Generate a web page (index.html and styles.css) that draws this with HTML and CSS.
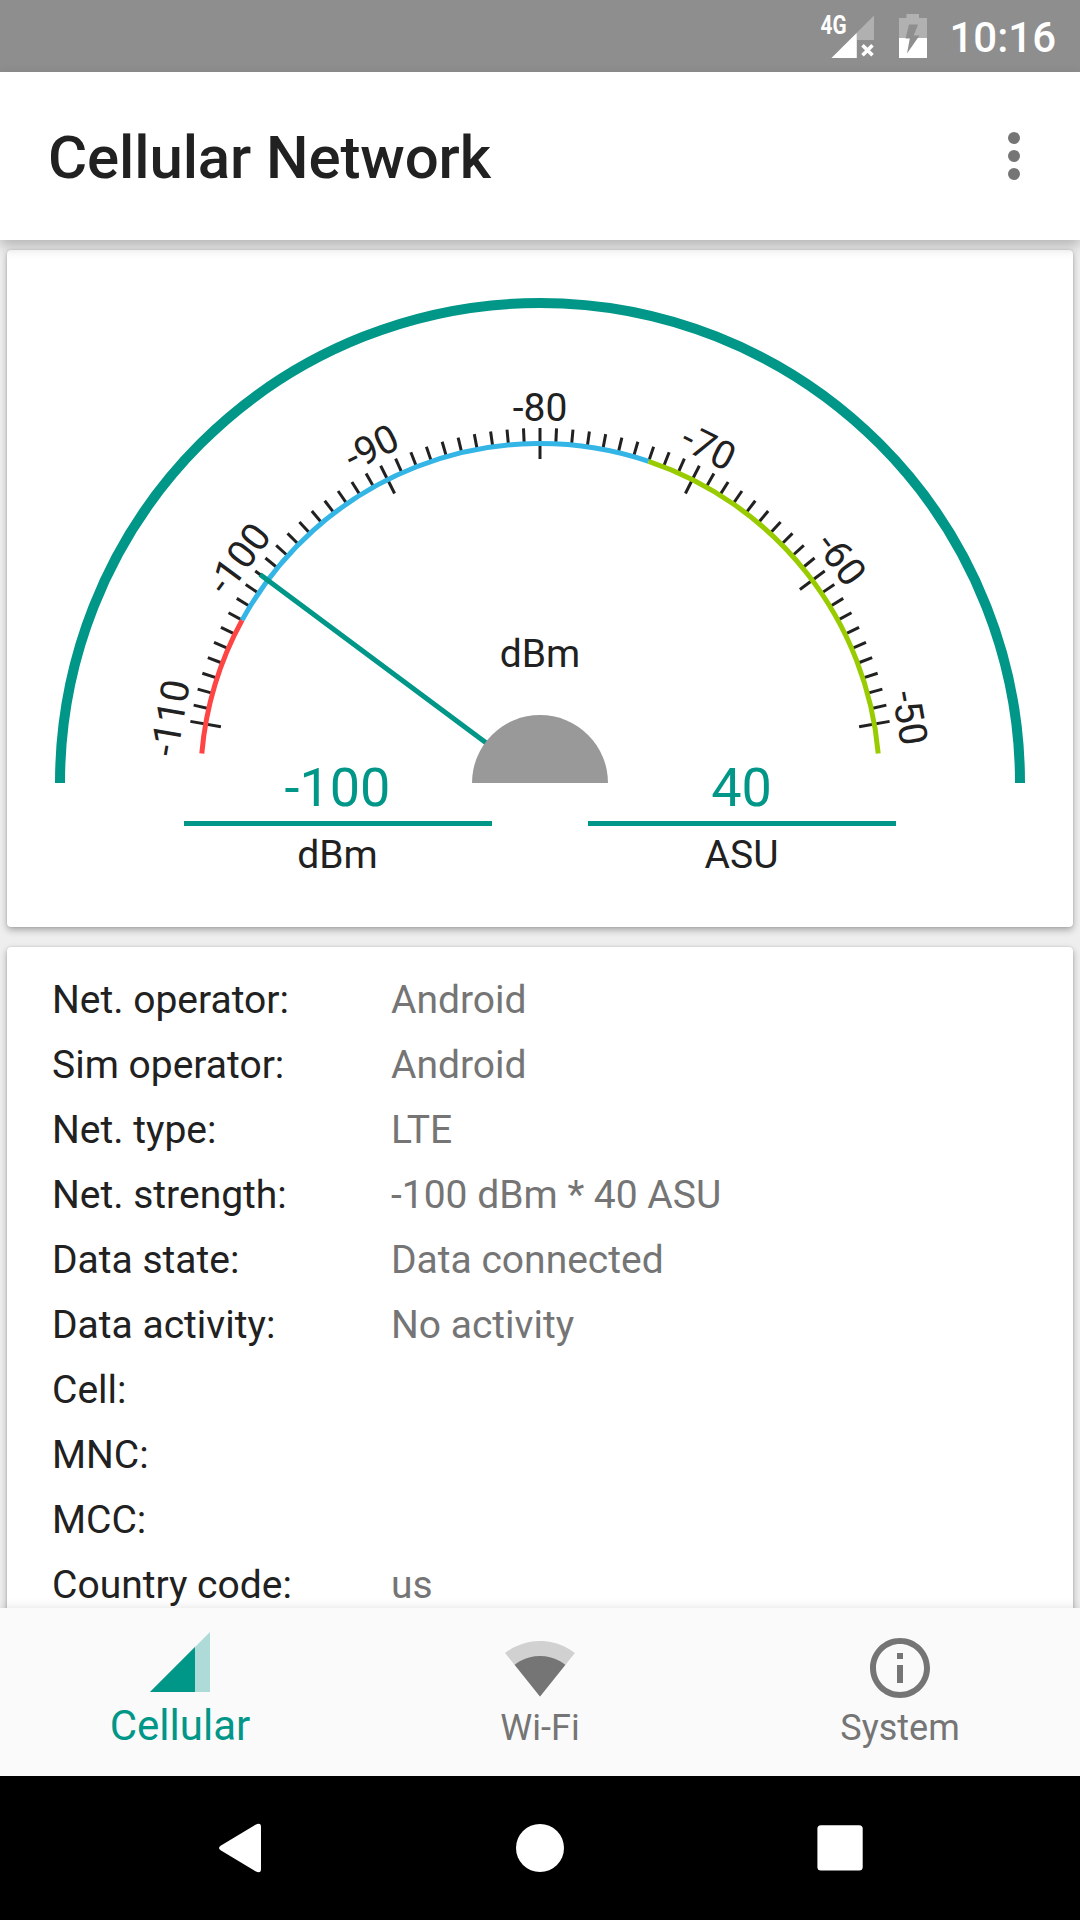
FILE: index.html
```html
<!DOCTYPE html>
<html lang="en">
<head>
    <meta charset="UTF-8">
    <meta name="viewport" content="width=device-width, initial-scale=1.0">
    <title>Cellular Network</title>
    <link rel="stylesheet" href="styles.css">
</head>
<body>

    <!-- Status bar -->
    <div class="status-bar">
        <svg class="signal-icon" width="56" height="72" viewBox="820 0 56 72">
            <path d="M874 15.5V40H857V58H831.500z" fill="#fff" opacity="0.3"/>
            <path d="M856.700 33V58H831.500z" fill="#fff"/>
            <path d="M862.500 45.200l10 10M872.500 45.200l-10 10" stroke="#fff" stroke-width="3.600"/>
            <text class="net-label" x="820.500" y="33.500" textLength="26" lengthAdjust="spacingAndGlyphs">4G</text>
        </svg>
        <svg class="battery-icon" width="28" height="72" viewBox="899 0 28 72">
            <path d="M899 38V18h7.500v-4h12.500v4h8v20z" fill="#b1b1b1"/>
            <path d="M899 38h28v20h-28z" fill="#fff"/>
            <path d="M909 24.500h9l-4.300 11h5.800L907 53.500l2.800-15h-4.300z" fill="#8e8e8e"/>
        </svg>
        <span class="clock">10:16</span>
    </div>

    <!-- App bar -->
    <header class="app-bar">
        <h1>Cellular Network</h1>
        <svg class="menu-icon" width="12" height="48" viewBox="0 0 12 48">
            <circle cx="6" cy="6" r="6"/>
            <circle cx="6" cy="24" r="6"/>
            <circle cx="6" cy="42" r="6"/>
        </svg>
    </header>

    <main>
        <!-- Signal gauge -->
        <section class="card gauge-card">
            <svg class="gauge" viewBox="-533 -533 1066 533">
                <path class="rim" d="M-480 0A480 480 0 0 1 480 0"/>
                <g id="ticks"></g>
                <g id="bands"></g>
                <text class="unit" x="0" y="-116">dBm</text>
                <line id="needle" class="needle" x1="0" y1="0" x2="0" y2="-349"/>
                <path class="hub" d="M-68 0A68 68 0 0 1 68 0z"/>
            </svg>
            <div class="readings">
                <div class="reading">
                    <div class="value">-100</div>
                    <div class="label">dBm</div>
                </div>
                <div class="reading">
                    <div class="value">40</div>
                    <div class="label">ASU</div>
                </div>
            </div>
        </section>

        <!-- Network details -->
        <section class="card">
            <dl class="details">
                <dt>Net. operator:</dt><dd>Android</dd>
                <dt>Sim operator:</dt><dd>Android</dd>
                <dt>Net. type:</dt><dd>LTE</dd>
                <dt>Net. strength:</dt><dd>-100 dBm * 40 ASU</dd>
                <dt>Data state:</dt><dd>Data connected</dd>
                <dt>Data activity:</dt><dd>No activity</dd>
                <dt>Cell:</dt><dd></dd>
                <dt>MNC:</dt><dd></dd>
                <dt>MCC:</dt><dd></dd>
                <dt>Country code:</dt><dd>us</dd>
            </dl>
        </section>
    </main>

    <!-- Bottom tabs -->
    <nav class="tabs">
        <a class="tab active">
            <svg width="72" height="72" viewBox="0 0 24 24">
                <path fill-opacity="0.3" d="M2 22h20V2z"/>
                <path d="M17 7L2 22h15z"/>
            </svg>
            <span>Cellular</span>
        </a>
        <a class="tab">
            <svg width="72" height="72" viewBox="0 0 24 24">
                <path fill-opacity="0.3" d="M23.640 7c-.45-.34-4.930-4-11.640-4C5.280 3 .81 6.660.36 7L12 21.500 23.640 7z"/>
                <path d="M3.530 10.950l8.460 10.540.01.01.01-.01 8.460-10.540C20.040 10.620 16.810 8 12 8c-4.810 0-8.040 2.620-8.470 2.950z"/>
            </svg>
            <span>Wi-Fi</span>
        </a>
        <a class="tab">
            <svg width="72" height="72" viewBox="0 0 24 24">
                <path d="M11 17h2v-6h-2v6zm1-15C6.480 2 2 6.480 2 12s4.480 10 10 10 10-4.480 10-10S17.520 2 12 2zm0 18c-4.410 0-8-3.590-8-8s3.590-8 8-8 8 3.590 8 8-3.590 8-8 8zM11 9h2V7h-2v2z"/>
            </svg>
            <span>System</span>
        </a>
    </nav>

    <!-- System navigation -->
    <div class="system-nav">
        <svg width="48" height="50" viewBox="0 0 48 50">
            <path d="M5 22.500Q1 25 5 27.500L39.500 48.300Q45 51 45 46V4Q45-1 39.500 1.700z"/>
        </svg>
        <svg width="48" height="50" viewBox="0 0 48 50">
            <circle cx="24" cy="25" r="24"/>
        </svg>
        <svg width="48" height="50" viewBox="0 0 48 50">
            <rect x="1.400" y="2.300" width="45.300" height="45.300" rx="3.500"/>
        </svg>
    </div>

    <script>
        // Degrees per dBm, with -80 dBm pointing straight up
        const step = 80 / 30;
        const radius = 339.5;
        const svgNS = 'http://www.w3.org/2000/svg';

        function add(parent, tag, attrs, text) {
            const el = document.createElementNS(svgNS, tag);
            for (const key in attrs) {
                el.setAttribute(key, attrs[key]);
            }
            if (text) {
                el.textContent = text;
            }
            document.getElementById(parent).appendChild(el);
        }

        function point(deg) {
            const a = deg * Math.PI / 180;
            return (radius * Math.sin(a)).toFixed(2) + ' ' + (-radius * Math.cos(a)).toFixed(2);
        }

        function addBand(name, from, to) {
            add('bands', 'path', {
                class: 'band ' + name,
                d: `M${point(from)}A${radius} ${radius} 0 0 1 ${point(to)}`
            });
        }

        for (let dbm = -110; dbm <= -50; dbm++) {
            const rotate = 'rotate(' + (dbm + 80) * step + ')';
            const major = dbm % 10 === 0;
            add('ticks', 'line', { class: 'tick', y1: -355, y2: major ? -324 : -340, transform: rotate });
            if (major) {
                add('ticks', 'text', { y: -362, transform: rotate }, String(dbm));
            }
        }

        addBand('poor', -85, -23 * step);
        addBand('good', -23 * step, 7 * step);
        addBand('great', 7 * step, 85);

        document.getElementById('needle').setAttribute('transform', 'rotate(' + (-100 + 80) * step + ')');
    </script>
</body>
</html>
```

FILE: styles.css
```css
* {
    box-sizing: border-box;
}

body {
    margin: 0;
    width: 1080px;
    height: 1920px;
    display: flex;
    flex-direction: column;
    overflow: hidden;
    font-family: Roboto, sans-serif;
    font-size: 39px;
    color: #212121;
    background-color: #eeeeee;
}

/* Status bar */
.status-bar {
    flex: none;
    height: 72px;
    padding-right: 24px;
    display: flex;
    align-items: center;
    justify-content: flex-end;
    color: white;
    background-color: #8e8e8e;
}

.signal-icon {
    margin-right: 23px;
}

.net-label {
    font-size: 26px;
    font-weight: 700;
    fill: white;
}

.clock {
    margin-left: 22px;
    padding-top: 4px;
    font-size: 42px;
    font-weight: 500;
    line-height: 68px;
}

/* App bar */
.app-bar {
    flex: none;
    position: relative;
    z-index: 1;
    height: 168px;
    padding: 0 60px 0 48px;
    display: flex;
    align-items: center;
    justify-content: space-between;
    background-color: white;
    box-shadow: 0 6px 12px rgba(0, 0, 0, 0.24);
}

h1 {
    margin: 0;
    padding-top: 2px;
    font-size: 60px;
    font-weight: 500;
    letter-spacing: -0.12px;
}

.menu-icon {
    fill: #757575;
}

/* Content */
main {
    flex: 1;
    min-height: 0;
    padding: 10px 7px;
    display: flex;
    flex-direction: column;
    gap: 20px;
    overflow: hidden;
}

.card {
    flex: none;
    background-color: white;
    border-radius: 4px;
    box-shadow: 0 3px 7px rgba(0, 0, 0, 0.3), 0 0 2px rgba(0, 0, 0, 0.15);
}

.gauge-card {
    height: 677px;
}

/* Gauge */
.gauge {
    display: block;
    width: 1066px;
    height: 533px;
}

.gauge text {
    fill: #212121;
    text-anchor: middle;
}

.rim {
    fill: none;
    stroke: #009688;
    stroke-width: 10;
}

.tick {
    stroke: #212121;
    stroke-width: 3;
}

.band {
    fill: none;
    stroke-width: 5;
}

.poor {
    stroke: #ff4444;
}

.good {
    stroke: #33b5e5;
}

.great {
    stroke: #99cc00;
}

.needle {
    stroke: #009688;
    stroke-width: 5;
}

.hub {
    fill: #999999;
}

.readings {
    display: flex;
    justify-content: center;
    gap: 96px;
    margin-top: -28px;
    padding-right: 1px;
}

.reading {
    width: 308px;
    text-align: center;
}

.value {
    height: 71px;
    border-bottom: 5px solid #009688;
    font-size: 54px;
    line-height: 66px;
    color: #009688;
}

.label {
    margin-top: 6px;
    line-height: 46px;
}

/* Details list */
.details {
    margin: 0;
    padding: 21px 45px 20px;
    display: grid;
    grid-template-columns: 339px 1fr;
    grid-auto-rows: 65px;
    line-height: 65px;
}

.details dd {
    margin: 0;
    color: #757575;
}

/* Bottom tabs */
.tabs {
    flex: none;
    position: relative;
    height: 168px;
    padding: 0;
    display: flex;
    justify-content: center;
    background-color: #fafafa;
    box-shadow: 0 0 10px rgba(0, 0, 0, 0.12);
}

.tab {
    width: 360px;
    padding-top: 24px;
    display: flex;
    flex-direction: column;
    align-items: center;
    font-size: 36px;
    line-height: 48px;
    color: #757575;
}

.tab svg {
    fill: currentColor;
}

.tab.active {
    padding-top: 18px;
    font-size: 42px;
    line-height: 56px;
    color: #009688;
}

/* System navigation */
.system-nav {
    flex: none;
    position: relative;
    height: 144px;
    display: flex;
    align-items: center;
    justify-content: center;
    gap: 252px;
    background-color: black;
}

.system-nav svg {
    fill: white;
}
```
